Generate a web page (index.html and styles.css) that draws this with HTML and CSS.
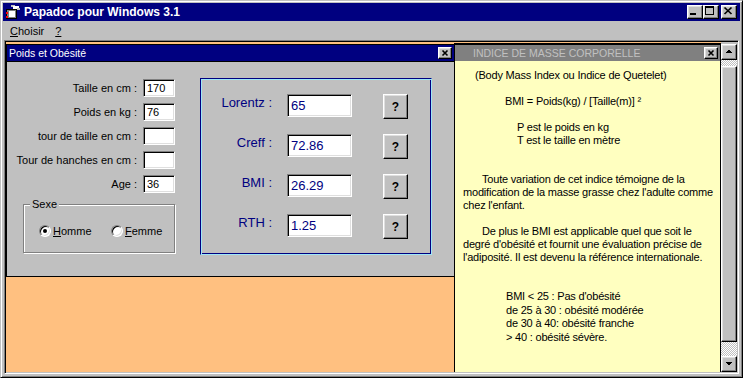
FILE: index.html
```html
<!DOCTYPE html>
<html lang="fr">
<head>
<meta charset="utf-8">
<title>Papadoc pour Windows 3.1</title>
<link rel="stylesheet" href="styles.css">
</head>
<body>
<div class="win">
  <div class="titlebar">
    <svg class="appicon" width="16" height="16" viewBox="0 0 16 16" shape-rendering="crispEdges">
      <rect x="1" y="5" width="11" height="10" fill="#000"/>
      <rect x="2" y="6" width="9" height="8" fill="#808080"/>
      <rect x="4" y="7" width="6" height="6" fill="#fff"/>
      <rect x="1" y="8" width="2" height="2" fill="#f00"/>
      <rect x="1" y="12" width="2" height="2" fill="#f00"/>
      <rect x="6" y="1" width="4" height="2" fill="#c0c0c0"/>
      <rect x="8" y="2" width="6" height="3" fill="#fff"/>
      <rect x="12" y="4" width="3" height="2" fill="#c0c0c0"/>
    </svg>
    <span class="apptitle">Papadoc pour Windows 3.1</span>
    <div class="capbtns">
      <span class="cbtn raised"><svg width="16" height="14" viewBox="0 0 16 14" shape-rendering="crispEdges"><rect x="3" y="8" width="6" height="2" fill="#000"/></svg></span>
      <span class="cbtn raised"><svg width="16" height="14" viewBox="0 0 16 14" shape-rendering="crispEdges"><rect x="2.5" y="1.5" width="8" height="8" fill="none" stroke="#000"/><rect x="2" y="1" width="9" height="2" fill="#000"/></svg></span>
      <span class="cbtn close raised"><svg width="16" height="14" viewBox="0 0 16 14"><path d="M3.5 2.5l7 6.5M10.5 2.5l-7 6.5" stroke="#000" stroke-width="1.7"/></svg></span>
    </div>
  </div>

  <div class="menubar">
    <span class="menuitem"><u>C</u>hoisir</span>
    <span class="menuitem"><u>?</u></span>
  </div>

  <div class="client">
    <div class="desk">
      <div class="child poids">
        <div class="ctitle active">
          <span>Poids et Obésité</span>
          <span class="sbtn raised"><svg width="12" height="10" viewBox="0 0 12 10"><path d="M3.5 2.5l5 5M8.5 2.5l-5 5" stroke="#000" stroke-width="1.6"/></svg></span>
        </div>
        <div class="cbody">
          <div class="leftcol">
            <div class="form">
              <span class="flab">Taille en cm :</span><span class="field sunken">170</span>
              <span class="flab">Poids en kg :</span><span class="field sunken">76</span>
              <span class="flab">tour de taille en cm :</span><span class="field sunken"></span>
              <span class="flab">Tour de hanches en cm :</span><span class="field sunken"></span>
              <span class="flab">Age :</span><span class="field sunken">36</span>
            </div>
            <div class="group">
              <span class="legend">Sexe</span>
              <div class="radios">
                <span class="radio first"><span class="rdot"><span class="dot"></span></span><span><u>H</u>omme</span></span>
                <span class="radio"><span class="rdot"></span><span><u>F</u>emme</span></span>
              </div>
            </div>
          </div>
          <div class="results">
            <div class="rrow"><span class="rlab">Lorentz :</span><span class="rval sunken">65</span><span class="qbtn raised">?</span></div>
            <div class="rrow"><span class="rlab">Creff :</span><span class="rval sunken">72.86</span><span class="qbtn raised">?</span></div>
            <div class="rrow"><span class="rlab">BMI :</span><span class="rval sunken">26.29</span><span class="qbtn raised">?</span></div>
            <div class="rrow"><span class="rlab">RTH :</span><span class="rval sunken">1.25</span><span class="qbtn raised">?</span></div>
          </div>
        </div>
      </div>

      <div class="child indice">
        <div class="ctitle inactive">
          <span>INDICE DE MASSE CORPORELLE</span>
          <span class="sbtn raised"><svg width="12" height="10" viewBox="0 0 12 10"><path d="M3.5 2.5l5 5M8.5 2.5l-5 5" stroke="#000" stroke-width="1.6"/></svg></span>
        </div>
        <div class="ibody">
          <p class="in-a">(Body Mass Index ou Indice de Quetelet)</p>
          <p class="in-b gap1">BMI = Poids(kg) / [Taille(m)] ²</p>
          <p class="in-c gap1">P est le poids en kg<br>T est le taille en mètre</p>
          <p class="para gap2">Toute variation de cet indice témoigne de la<br>modification de la masse grasse chez l'adulte comme<br>chez l'enfant.</p>
          <p class="para gap1">De plus le BMI est applicable quel que soit le<br>degré d'obésité et fournit une évaluation précise de<br>l'adiposité. Il est devenu la référence internationale.</p>
          <p class="in-d gap2">BMI &lt; 25 : Pas d'obésité<br>de 25 à 30 : obésité modérée<br>de 30 à 40: obésité franche<br>&gt; 40 : obésité sévère.</p>
        </div>
      </div>
    </div>

    <div class="vscroll">
      <span class="sarrow raised"><svg width="14" height="14" viewBox="0 0 14 14" shape-rendering="crispEdges"><path d="M3 8h7L6.5 4.5z" fill="#000"/></svg></span>
      <div class="track">
        <div class="thumb raised"></div>
      </div>
      <span class="sarrow raised"><svg width="14" height="14" viewBox="0 0 14 14" shape-rendering="crispEdges"><path d="M3 5h7L6.5 8.5z" fill="#000"/></svg></span>
    </div>
  </div>
</div>
</body>
</html>
```

FILE: styles.css
```css
* {
  box-sizing: border-box;
  margin: 0;
  padding: 0;
}

html, body {
  width: 743px;
  height: 378px;
  overflow: hidden;
}

body {
  background: #c0c0c0;
  font-family: "Liberation Sans", Arial, sans-serif;
  font-size: 11px;
  color: #000;
}

.raised {
  background: #c0c0c0;
  border: 1px solid;
  border-color: #fff #000 #000 #fff;
  box-shadow: inset -1px -1px #808080, inset 1px 1px #dfdfdf;
}

.sunken {
  background: #fff;
  border: 1px solid;
  border-color: #808080 #fff #fff #808080;
  box-shadow: inset 1px 1px #000, inset -1px -1px #dfdfdf;
}

/* main window */
.win {
  width: 743px;
  height: 378px;
  display: flex;
  flex-direction: column;
  background: #c0c0c0;
  border: 1px solid;
  border-color: #c0c0c0 #000 #000 #c0c0c0;
  box-shadow: inset 1px 1px #fff, inset -1px -1px #808080;
  padding: 2px;
}

.titlebar {
  height: 18px;
  flex: none;
  display: flex;
  align-items: center;
  background: #000080;
  color: #fff;
  padding: 0 3px 0 2px;
}

.appicon {
  display: block;
  flex: none;
}

.apptitle {
  flex: 1;
  margin-left: 3px;
  font-weight: bold;
  font-size: 12px;
  white-space: nowrap;
}

.capbtns {
  display: flex;
}

.cbtn {
  width: 16px;
  height: 14px;
  position: relative;
  display: block;
}

.cbtn svg {
  position: absolute;
  left: -1px;
  top: -1px;
}

.cbtn.close {
  margin-left: 2px;
}

.menubar {
  height: 19px;
  flex: none;
  display: flex;
  align-items: center;
  padding-left: 7px;
  gap: 11px;
}

/* MDI client */
.client {
  flex: 1;
  display: flex;
  margin: 0 1px 1px;
  border: 1px solid;
  border-color: #808080 #fff #fff #808080;
  box-shadow: inset 1px 1px #000, inset -1px -1px #c0c0c0;
  padding: 1px;
  background: #c0c0c0;
}

.desk {
  flex: 1;
  position: relative;
  background: #ffc080;
}

.child {
  position: absolute;
  display: flex;
  flex-direction: column;
  border: 1px solid #000;
}

.ctitle {
  flex: none;
  height: 16px;
  display: flex;
  align-items: center;
  padding: 0 2px;
  font-size: 10.5px;
  white-space: nowrap;
}

.ctitle.active {
  height: 17px;
  background: #000080;
  color: #fff;
  border-bottom: 1px solid #000;
}

.ctitle.inactive {
  background: #808080;
  color: #c0c0c0;
  padding-left: 18px;
}

.sbtn {
  margin-left: auto;
  width: 14px;
  height: 12px;
  position: relative;
  display: block;
}

.sbtn svg {
  position: absolute;
  left: 0;
  top: 0;
}

/* Poids window */
.poids {
  left: 0;
  top: 2px;
  width: 449px;
  height: 233px;
  background: #c0c0c0;
}

.cbody {
  flex: 1;
  display: flex;
  padding: 16px 0 0 5px;
}

.leftcol {
  width: 163px;
  flex: none;
  padding-top: 1px;
}

.form {
  display: grid;
  grid-template-columns: 125px 32px;
  column-gap: 6px;
  row-gap: 6px;
}

.flab {
  text-align: right;
  line-height: 18px;
  white-space: nowrap;
}

.field {
  height: 18px;
  padding-left: 3px;
  line-height: 16px;
}

.group {
  margin: 11px 0 0 11px;
  width: 152px;
  height: 49px;
  border: 1px solid #808080;
  box-shadow: inset 1px 1px #fff, 1px 1px #fff;
}

.legend {
  display: block;
  width: fit-content;
  margin: -7px 0 0 6px;
  padding: 0 2px;
  line-height: 13px;
  background: #c0c0c0;
}

.radios {
  display: flex;
  align-items: center;
  height: 13px;
  margin: 13px 0 0 15px;
}

.radio {
  flex: none;
  display: flex;
  align-items: center;
  gap: 2px;
}

.radio.first {
  width: 72px;
}

.rdot {
  flex: none;
  width: 12px;
  height: 12px;
  border-radius: 50%;
  background: #fff;
  border: 1px solid;
  border-color: #808080 #fff #fff #808080;
  box-shadow: inset 1px 1px #000, inset -1px -1px #dfdfdf;
  display: flex;
  align-items: center;
  justify-content: center;
}

.dot {
  width: 4px;
  height: 4px;
  border-radius: 50%;
  background: #000;
}

.results {
  flex: none;
  margin-left: 25px;
  width: 232px;
  height: 177px;
  border: 1px solid;
  border-color: #000080 #9fe7f7 #9fe7f7 #000080;
  box-shadow: inset 1px 1px #9fe7f7, inset -1px -1px #000080;
  padding-top: 15px;
}

.rrow {
  display: flex;
  height: 25px;
  margin-bottom: 15px;
}

.rlab {
  flex: none;
  width: 71px;
  text-align: right;
  color: #000080;
  font-size: 13px;
  line-height: 18px;
  white-space: nowrap;
}

.rval {
  flex: none;
  margin-left: 15px;
  width: 65px;
  height: 23px;
  padding-left: 3px;
  color: #000080;
  font-size: 13px;
  line-height: 21px;
}

.qbtn {
  flex: none;
  margin-left: 31px;
  width: 25px;
  height: 25px;
  display: flex;
  align-items: center;
  justify-content: center;
  font-weight: bold;
  font-size: 12px;
}

/* Indice window */
.indice {
  left: 448px;
  top: 1px;
  width: 267px;
  height: 329px;
  border-width: 2px 1px 0 1px;
  background: #ffffc0;
}

.ibody {
  flex: 1;
  padding: 8px 0 0 8px;
  line-height: 13px;
  white-space: nowrap;
  letter-spacing: -0.2px;
}

.gap1 { margin-top: 13px; }
.gap2 { margin-top: 26px; }

.in-a { padding-left: 12px; }
.in-b { padding-left: 42px; }
.in-c { padding-left: 54px; }
.in-d { padding-left: 43px; line-height: 13.7px; }
.para { text-indent: 19px; }

/* scrollbar */
.vscroll {
  width: 16px;
  flex: none;
  display: flex;
  flex-direction: column;
  margin-top: 2px;
}

.sarrow {
  width: 16px;
  height: 16px;
  flex: none;
  position: relative;
  display: block;
}

.sarrow svg {
  position: absolute;
  left: 0;
  top: 0;
}

.track {
  flex: 1;
  padding-top: 6px;
  background: repeating-conic-gradient(#fff 0 25%, #c0c0c0 0 50%) 0 0 / 2px 2px;
}

.thumb {
  width: 16px;
  height: 276px;
}
```
